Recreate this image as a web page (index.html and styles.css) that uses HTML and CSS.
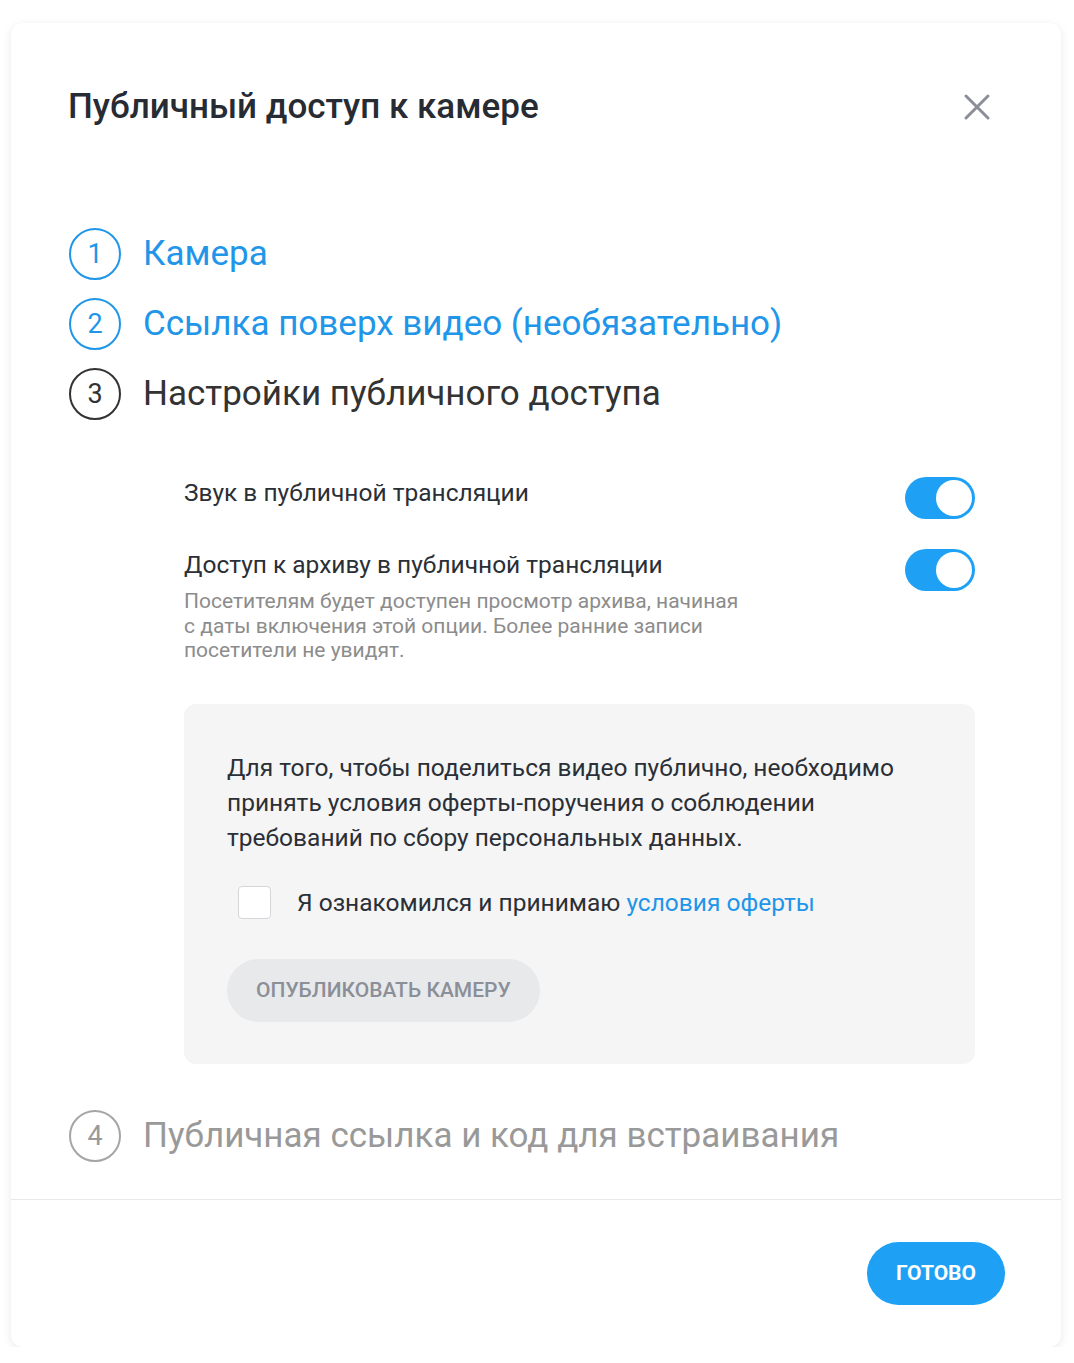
FILE: index.html
```html
<!DOCTYPE html>
<html>
<head>
    <title>Публичный доступ к камере</title>
    <link rel="stylesheet" href="styles.css">
</head>
<body>
    <div class="modal">
        <div class="modal-header">
            <h1>Публичный доступ к камере</h1>
            <button class="close" aria-label="Закрыть">
                <svg width="28" height="28" viewBox="0 0 28 28">
                    <path d="M3 3 L25 25 M25 3 L3 25" stroke="#8b8e97" stroke-width="3" stroke-linecap="round"/>
                </svg>
            </button>
        </div>

        <div class="steps">
            <div class="step done">
                <span class="step-num">1</span>
                <span class="step-title">Камера</span>
            </div>
            <div class="step done">
                <span class="step-num">2</span>
                <span class="step-title">Ссылка поверх видео (необязательно)</span>
            </div>
            <div class="step active">
                <span class="step-num">3</span>
                <span class="step-title">Настройки публичного доступа</span>
            </div>

            <div class="step-content">
                <div class="setting">
                    <div class="setting-text">
                        <div class="setting-label">Звук в публичной трансляции</div>
                    </div>
                    <label class="toggle"><input type="checkbox" checked><span class="slider"></span></label>
                </div>
                <div class="setting">
                    <div class="setting-text">
                        <div class="setting-label">Доступ к архиву в публичной трансляции</div>
                        <div class="setting-hint">Посетителям будет доступен просмотр архива, начиная с даты включения этой опции. Более ранние записи посетители не увидят.</div>
                    </div>
                    <label class="toggle"><input type="checkbox" checked><span class="slider"></span></label>
                </div>

                <div class="offer-box">
                    <p>Для того, чтобы поделиться видео публично, необходимо принять условия оферты-поручения о соблюдении требований по сбору персональных данных.</p>
                    <label class="agree">
                        <input type="checkbox">
                        <span class="box"></span>
                        <span>Я ознакомился и принимаю <a href="#">условия оферты</a></span>
                    </label>
                    <button class="publish" disabled>Опубликовать камеру</button>
                </div>
            </div>

            <div class="step pending">
                <span class="step-num">4</span>
                <span class="step-title">Публичная ссылка и код для встраивания</span>
            </div>
        </div>

        <div class="modal-footer">
            <button class="done-button">Готово</button>
        </div>
    </div>
</body>
</html>
```

FILE: styles.css
```css
body {
    margin: 0;
    background: #fff;
    font-family: Roboto, "Noto Sans", sans-serif;
    color: #2b2f36;
}

.modal {
    margin: 23px 13px 0 11px;
    border-radius: 12px;
    background: #fff;
    box-shadow: 0 2px 10px rgba(0, 0, 0, 0.09);
}

.modal-header {
    display: flex;
    justify-content: space-between;
    align-items: center;
    padding: 64px 70px 0 57px;
}

h1 {
    margin: 0;
    font-size: 35px;
    line-height: 40px;
    font-weight: 500;
    color: #272b33;
}

.close {
    border: none;
    background: none;
    padding: 0;
    width: 28px;
    height: 28px;
    cursor: pointer;
}

/* Steps */
.steps {
    padding: 101px 86px 37px 58px;
    display: flex;
    flex-direction: column;
    gap: 18px;
}

.step {
    display: flex;
    align-items: center;
    gap: 22px;
}

.step-num {
    width: 48px;
    height: 48px;
    border: 2px solid currentColor;
    border-radius: 50%;
    display: flex;
    align-items: center;
    justify-content: center;
    font-size: 27px;
    flex-shrink: 0;
}

.step-title {
    font-size: 35px;
    line-height: 40px;
}

.step.done {
    color: #2196e8;
}

.step.active {
    color: #333;
}

.step.pending {
    color: #999;
    margin-top: 28px;
}

.step.pending .step-num {
    border-color: #a5a5a5;
}

/* Step 3 content */
.step-content {
    margin: 39px 0 0 115px;
}

.setting {
    display: flex;
    justify-content: space-between;
    align-items: flex-start;
    gap: 20px;
    margin-bottom: 30px;
}

.setting-label {
    font-size: 24.5px;
    line-height: 32px;
    color: #2b2f36;
}

.setting-hint {
    margin-top: 8px;
    max-width: 565px;
    font-size: 21px;
    line-height: 24.5px;
    color: #8c8c8c;
}

.toggle {
    position: relative;
    width: 70px;
    height: 42px;
    flex-shrink: 0;
}

.toggle input {
    display: none;
}

.slider {
    position: absolute;
    inset: 0;
    border-radius: 21px;
    background: #1ea1f5;
}

.slider::after {
    content: "";
    position: absolute;
    top: 3px;
    right: 3px;
    width: 36px;
    height: 36px;
    border-radius: 50%;
    background: #fff;
}

.offer-box {
    margin-top: 41px;
    padding: 46px 43px 42px;
    background: #f5f5f6;
    border-radius: 12px;
}

.offer-box p {
    margin: 0;
    max-width: 690px;
    font-size: 24.5px;
    line-height: 35px;
    color: #2b2f36;
}

.agree {
    display: flex;
    align-items: center;
    gap: 26px;
    margin: 31px 0 0 11px;
    font-size: 24.5px;
    color: #2b2f36;
}

.agree input {
    display: none;
}

.box {
    width: 31px;
    height: 31px;
    border: 1px solid #d4d6da;
    border-radius: 4px;
    background: #fff;
}

.agree a {
    color: #2196e8;
    text-decoration: none;
}

.publish {
    margin-top: 40px;
    height: 63px;
    padding: 0 29px;
    border: none;
    border-radius: 32px;
    background: #e8e9eb;
    color: #8b8f98;
    font-family: inherit;
    font-size: 21px;
    font-weight: 500;
    text-transform: uppercase;
}

/* Footer */
.modal-footer {
    border-top: 1px solid #e8e8e8;
    display: flex;
    justify-content: flex-end;
    padding: 42px 56px 42px;
}

.done-button {
    height: 63px;
    padding: 0 29px;
    border: none;
    border-radius: 32px;
    background: #1ea1f5;
    color: #fff;
    font-family: inherit;
    font-size: 21px;
    font-weight: 700;
    text-transform: uppercase;
    cursor: pointer;
}
```
